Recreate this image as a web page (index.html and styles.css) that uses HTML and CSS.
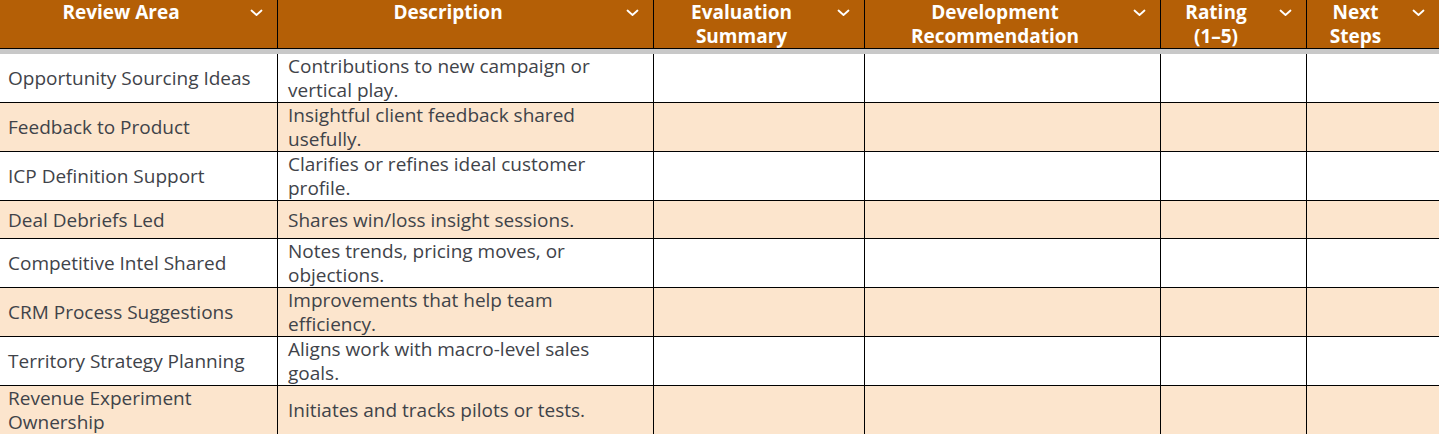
FILE: index.html
```html
<!DOCTYPE html>
<html lang="en">
<head>
<meta charset="utf-8">
<title>Review Areas</title>
<link rel="stylesheet" href="styles.css">
</head>
<body>
<div class="sheet">
  <div class="row head">
    <div class="cell"><span class="label">Review Area</span><svg class="chev" viewBox="0 0 13 8"><polyline points="1.5,1.5 6.5,6 11.5,1.5"/></svg></div>
    <div class="cell"><span class="label">Description</span><svg class="chev" viewBox="0 0 13 8"><polyline points="1.5,1.5 6.5,6 11.5,1.5"/></svg></div>
    <div class="cell"><span class="label">Evaluation<br>Summary</span><svg class="chev" viewBox="0 0 13 8"><polyline points="1.5,1.5 6.5,6 11.5,1.5"/></svg></div>
    <div class="cell"><span class="label">Development<br>Recommendation</span><svg class="chev" viewBox="0 0 13 8"><polyline points="1.5,1.5 6.5,6 11.5,1.5"/></svg></div>
    <div class="cell"><span class="label">Rating<br>(1–5)</span><svg class="chev" viewBox="0 0 13 8"><polyline points="1.5,1.5 6.5,6 11.5,1.5"/></svg></div>
    <div class="cell"><span class="label">Next<br>Steps</span><svg class="chev" viewBox="0 0 13 8"><polyline points="1.5,1.5 6.5,6 11.5,1.5"/></svg></div>
  </div>
  <div class="sep"></div>
  <div class="row">
    <div class="cell">Opportunity Sourcing Ideas</div>
    <div class="cell">Contributions to new campaign or<br>vertical play.</div>
    <div class="cell"></div><div class="cell"></div><div class="cell"></div><div class="cell"></div>
  </div>
  <div class="row alt">
    <div class="cell">Feedback to Product</div>
    <div class="cell">Insightful client feedback shared<br>usefully.</div>
    <div class="cell"></div><div class="cell"></div><div class="cell"></div><div class="cell"></div>
  </div>
  <div class="row">
    <div class="cell">ICP Definition Support</div>
    <div class="cell">Clarifies or refines ideal customer<br>profile.</div>
    <div class="cell"></div><div class="cell"></div><div class="cell"></div><div class="cell"></div>
  </div>
  <div class="row alt">
    <div class="cell">Deal Debriefs Led</div>
    <div class="cell">Shares win/loss insight sessions.</div>
    <div class="cell"></div><div class="cell"></div><div class="cell"></div><div class="cell"></div>
  </div>
  <div class="row">
    <div class="cell">Competitive Intel Shared</div>
    <div class="cell">Notes trends, pricing moves, or<br>objections.</div>
    <div class="cell"></div><div class="cell"></div><div class="cell"></div><div class="cell"></div>
  </div>
  <div class="row alt">
    <div class="cell">CRM Process Suggestions</div>
    <div class="cell">Improvements that help team<br>efficiency.</div>
    <div class="cell"></div><div class="cell"></div><div class="cell"></div><div class="cell"></div>
  </div>
  <div class="row">
    <div class="cell">Territory Strategy Planning</div>
    <div class="cell">Aligns work with macro-level sales<br>goals.</div>
    <div class="cell"></div><div class="cell"></div><div class="cell"></div><div class="cell"></div>
  </div>
  <div class="row alt">
    <div class="cell">Revenue Experiment<br>Ownership</div>
    <div class="cell">Initiates and tracks pilots or tests.</div>
    <div class="cell"></div><div class="cell"></div><div class="cell"></div><div class="cell"></div>
  </div>
</div>
</body>
</html>
```

FILE: styles.css
```css
body {
  margin: 0;
  background: #ffffff;
  font-family: "Open Sans", "Noto Sans", sans-serif;
}

.sheet {
  width: 1439px;
}

.row {
  display: grid;
  grid-template-columns: 278px 376px 211px 296px 146px 1fr;
}

.row.alt {
  background: #fce5cd;
}

.cell {
  box-sizing: border-box;
  min-height: 38px;
  border-right: 1px solid #000;
  border-bottom: 1px solid #000;
  padding: 0 6px 0 10px;
  display: flex;
  align-items: center;
  font-size: 19px;
  line-height: 24px;
  color: #3f4349;
  white-space: nowrap;
}

.cell:first-child {
  padding-left: 8px;
}

.cell:last-child {
  border-right: none;
}

.head .cell {
  height: 49px;
  align-items: flex-start;
  gap: 16px;
  padding: 0 14px 0 8px;
  background: #b45f06;
  color: #ffffff;
  font-weight: 700;
}

.head .label {
  flex: 1;
  text-align: center;
}

.chev {
  flex: none;
  width: 13px;
  height: 8px;
  margin-top: 9px;
  fill: none;
  stroke: #ffffff;
  stroke-width: 1.8;
  stroke-linecap: round;
  stroke-linejoin: round;
}

.sep {
  height: 5px;
  background: #c8c8c8;
}
```
